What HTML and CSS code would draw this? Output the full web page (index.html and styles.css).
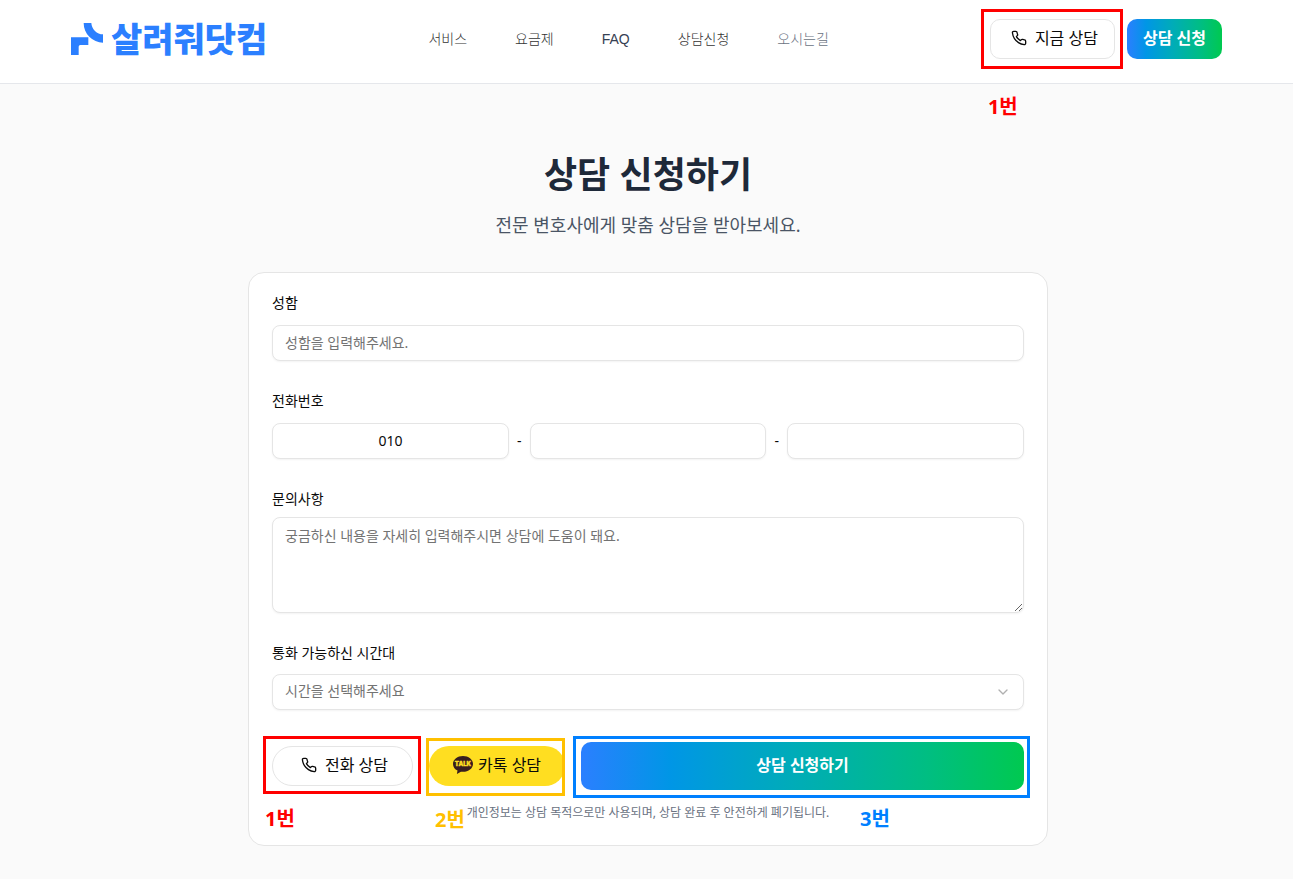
FILE: index.html
```html
<!DOCTYPE html>
<html lang="ko">
<head>
<meta charset="utf-8">
<meta name="viewport" content="width=device-width, initial-scale=1">
<title>살려줘닷컴 - 상담 신청하기</title>
<link rel="stylesheet" href="styles.css">
</head>
<body>
<header class="site-header">
  <div class="header-inner">
    <a class="logo" href="#">
      <svg class="logo-mark" viewBox="0 0 96 99" aria-hidden="true"><path d="M38 0H61A36 36 0 0 0 96 34V59A59 59 0 0 1 38 0ZM0 43H52V66H28Q23 66 23 71V96H0Z" fill="currentColor"/></svg>
      <span>살려줘닷컴</span>
    </a>
    <nav class="nav">
      <a href="#">서비스</a>
      <a href="#">요금제</a>
      <a class="nav-faq" href="#">FAQ</a>
      <a href="#">상담신청</a>
      <a class="nav-muted" href="#">오시는길</a>
    </nav>
    <div class="header-actions">
      <div class="marked">
        <button class="btn btn-outline" type="button">
          <svg class="icon-phone" viewBox="0 0 24 24" aria-hidden="true"><path d="M22 16.92v3a2 2 0 0 1-2.18 2 19.79 19.79 0 0 1-8.63-3.07 19.5 19.5 0 0 1-6-6 19.79 19.79 0 0 1-3.07-8.67A2 2 0 0 1 4.11 2h3a2 2 0 0 1 2 1.72 12.84 12.84 0 0 0 .7 2.81 2 2 0 0 1-.45 2.11L8.09 9.91a16 16 0 0 0 6 6l1.27-1.27a2 2 0 0 1 2.11-.45 12.84 12.84 0 0 0 2.81.7A2 2 0 0 1 22 16.92z"/></svg>
          지금 상담
        </button>
        <span class="frame frame-call-top"></span>
        <span class="tag tag-call-top">1번</span>
      </div>
      <button class="btn btn-gradient" type="button">상담 신청</button>
    </div>
  </div>
</header>
<main class="page">
  <h1 class="title">상담 신청하기</h1>
  <p class="subtitle">전문 변호사에게 맞춤 상담을 받아보세요.</p>
  <form class="card">
    <div class="field">
      <label for="name">성함</label>
      <input class="control" id="name" type="text" placeholder="성함을 입력해주세요.">
    </div>
    <div class="field">
      <label for="phone1">전화번호</label>
      <div class="phone-row">
        <input class="control" id="phone1" type="text" value="010">
        <span>-</span>
        <input class="control" type="text" aria-label="전화번호 가운데 자리">
        <span>-</span>
        <input class="control" type="text" aria-label="전화번호 끝자리">
      </div>
    </div>
    <div class="field field-tight">
      <label for="message">문의사항</label>
      <textarea class="control" id="message" placeholder="궁금하신 내용을 자세히 입력해주시면 상담에 도움이 돼요."></textarea>
    </div>
    <div class="field field-select">
      <label for="time">통화 가능하신 시간대</label>
      <div class="select-wrap">
        <select class="control" id="time"><option>시간을 선택해주세요</option></select>
        <svg class="chevron" viewBox="0 0 24 24" aria-hidden="true"><path d="m6 9 6 6 6-6"/></svg>
      </div>
    </div>
    <div class="actions">
      <div class="marked">
        <button class="btn btn-outline btn-pill" type="button">
          <svg class="icon-phone" viewBox="0 0 24 24" aria-hidden="true"><path d="M22 16.92v3a2 2 0 0 1-2.18 2 19.79 19.79 0 0 1-8.63-3.07 19.5 19.5 0 0 1-6-6 19.79 19.79 0 0 1-3.07-8.67A2 2 0 0 1 4.11 2h3a2 2 0 0 1 2 1.72 12.84 12.84 0 0 0 .7 2.81 2 2 0 0 1-.45 2.11L8.09 9.91a16 16 0 0 0 6 6l1.27-1.27a2 2 0 0 1 2.11-.45 12.84 12.84 0 0 0 2.81.7A2 2 0 0 1 22 16.92z"/></svg>
          전화 상담
        </button>
        <span class="frame frame-call"></span>
        <span class="tag tag-call">1번</span>
      </div>
      <div class="marked">
        <button class="btn btn-kakao" type="button">
          <svg class="icon-talk" viewBox="0 0 20 18" aria-hidden="true"><path d="M10 0C4.500 0 0 3.500 0 7.900c0 2.900 1.800 5.300 4.500 6.700L3.900 18l4-2.300c.7.1 1.400.1 2.100.1 5.500 0 10-3.500 10-7.900S15.500 0 10 0z" fill="#381e1f"/><text x="10" y="10" text-anchor="middle">TALK</text></svg>
          카톡 상담
        </button>
        <span class="frame frame-talk"></span>
        <span class="tag tag-talk">2번</span>
      </div>
      <div class="marked marked-wide">
        <button class="btn btn-gradient btn-submit" type="submit">상담 신청하기</button>
        <span class="frame frame-submit"></span>
        <span class="tag tag-submit">3번</span>
      </div>
    </div>
    <p class="note">개인정보는 상담 목적으로만 사용되며, 상담 완료 후 안전하게 폐기됩니다.</p>
  </form>
</main>
</body>
</html>
```
FILE: styles.css
```css
* { box-sizing: border-box; }
body {
  margin: 0;
  background: #fafafa;
  color: #0a0a0a;
  font-family: "Noto Sans", "Noto Sans CJK KR", sans-serif;
  font-size: 14px;
  line-height: 16px;
}
button, input, textarea, select { font: inherit; color: inherit; }
a { color: inherit; text-decoration: none; }

.site-header { background: #fff; border-bottom: 1px solid #e5e7eb; padding: 19px 26px 24px; }
.header-inner {
  display: flex; align-items: center; justify-content: space-between;
  max-width: 1151px; height: 40px; margin: 0 auto;
}
.logo {
  display: flex; align-items: center; gap: 8px;
  color: #2b7fff; font-size: 34px; font-weight: 900; line-height: 40px; white-space: nowrap;
}
.logo-mark { width: 32px; height: 33px; }
.nav { display: flex; gap: 48px; color: #333; font-family: "Liberation Sans", "Noto Sans CJK KR", sans-serif; font-weight: 300; white-space: nowrap; }
.nav-faq { color: #364153; }
.nav-muted { color: #6a7282; }
.header-actions { display: flex; gap: 12px; }

.btn {
  display: flex; align-items: center; justify-content: center; gap: 8px;
  height: 40px; padding: 0 16px 2px; border: 0; border-radius: 10px;
  font-size: 16px; line-height: 24px; white-space: nowrap; cursor: pointer;
}
.btn-outline { background: #fff; border: 1px solid #e5e5e5; padding-left: 20px; }
.btn-gradient { background: linear-gradient(to right, #2b7fff, #0096e6 20%, #00acb8 48%, #00be82 78%, #00c950); color: #fff; font-weight: 700; }
.btn-pill { border-radius: 20px; padding: 0 24px 2px 28px; }
.btn-kakao { background: #ffde21; border-radius: 20px; padding: 0 24px 2px; gap: 5px; }
.btn-submit { width: 100%; height: 48px; }
.icon-phone { width: 16px; height: 16px; fill: none; stroke: currentColor; stroke-width: 2; stroke-linecap: round; stroke-linejoin: round; }
.icon-talk { width: 20px; height: 18px; }
.icon-talk text { font: 900 6px Inter, sans-serif; fill: #ffde21; stroke: #ffde21; stroke-width: 0.3px; }

.page { padding: 67px 24px 33px 27px; }
.title { margin: 0 0 11px; text-align: center; color: #1e2939; font-size: 36px; font-weight: 700; line-height: 48px; }
.subtitle { margin: 0 0 32px; text-align: center; color: #4a5565; font-size: 18px; line-height: 30px; }

.card {
  max-width: 800px; margin: 0 auto; padding: 22px 23px 23px;
  background: #fff; border: 1px solid #e5e5e5; border-radius: 16px;
}
.field { display: flex; flex-direction: column; gap: 14px; margin-bottom: 32px; }
.field-tight { gap: 10px; }
.field-select { gap: 13px; }
.control {
  display: block; width: 100%; min-width: 0; height: 36px; padding: 0 12px 2px;
  background: #fff; border: 1px solid #e5e5e5; border-radius: 8px;
  box-shadow: 0 1px 2px rgba(0, 0, 0, 0.05); outline: 0;
}
.control::placeholder { color: #737373; }
textarea.control { height: 96px; padding: 8px 12px; line-height: 20px; resize: vertical; }
.phone-row { display: flex; align-items: center; gap: 8px; }
.phone-row .control { flex: 1; text-align: center; }
.select-wrap { position: relative; }
.select-wrap .control { appearance: none; color: #737373; }
.chevron {
  position: absolute; right: 13px; top: 10px; width: 16px; height: 16px; pointer-events: none;
  fill: none; stroke: #b0b0b0; stroke-width: 2; stroke-linecap: round; stroke-linejoin: round;
}
.actions { display: flex; align-items: center; gap: 16px; }
.note { margin: 14px 0 0; text-align: center; color: #6a7282; font-size: 12px; line-height: 18px; }

/* Numbered callouts drawn over the buttons */
.marked { position: relative; }
.marked-wide { flex: 1; }
.frame { position: absolute; border: 3px solid; pointer-events: none; }
.tag { position: absolute; font-size: 20px; font-weight: 700; line-height: 24px; white-space: nowrap; pointer-events: none; }
.frame-call-top { inset: -10px -8px -10px -9px; color: #f00; }
.frame-call { inset: -10px -8px -8px -9px; color: #f00; }
.frame-talk { inset: -8px 0 -10px -3px; color: #ffc000; }
.frame-submit { inset: -6px -6px -8px -8px; color: #0080ff; }
.tag-call-top { left: -2px; top: 76px; color: #f00; }
.tag-call { left: -7px; top: 61px; color: #f00; }
.tag-talk { left: 6px; top: 62px; color: #ffc000; }
.tag-submit { left: 279px; top: 65px; color: #0080ff; }
```
